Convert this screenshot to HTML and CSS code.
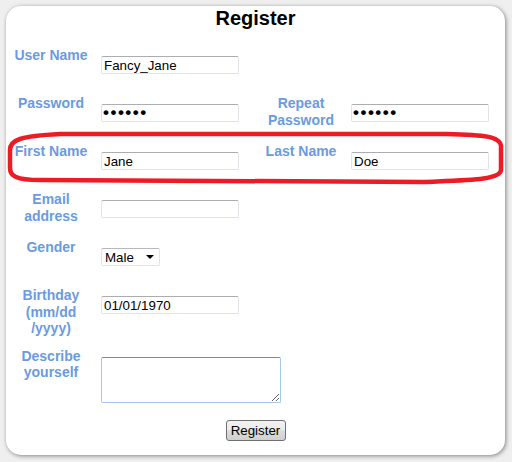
FILE: index.html
```html
<!DOCTYPE html>
<html>
<head>
<meta charset="utf-8">
<link rel="stylesheet" href="styles.css">
</head>
<body>
<div class="card">
  <h1 class="title">Register</h1>
  <form class="form">
    <div class="row">
      <label class="lbl">User Name</label>
      <div class="cell"><input class="field" type="text" value="Fancy_Jane"></div>
    </div>
    <div class="row">
      <label class="lbl">Password</label>
      <div class="cell"><input class="field pw" type="password" value="secret"></div>
      <label class="lbl">Repeat Password</label>
      <div class="cell cell-r"><input class="field pw" type="password" value="secret"></div>
    </div>
    <div class="row">
      <label class="lbl">First Name</label>
      <div class="cell"><input class="field" type="text" value="Jane"></div>
      <label class="lbl">Last Name</label>
      <div class="cell cell-r"><input class="field" type="text" value="Doe"></div>
    </div>
    <div class="row">
      <label class="lbl">Email<br>address</label>
      <div class="cell"><input class="field" type="text" value=""></div>
    </div>
    <div class="row">
      <label class="lbl">Gender</label>
      <div class="cell">
        <div class="select-wrap">
          <select class="select"><option>Male</option><option>Female</option></select>
        </div>
      </div>
    </div>
    <div class="row">
      <label class="lbl">Birthday<br>(mm/dd<br>/yyyy)</label>
      <div class="cell"><input class="field" type="text" value="01/01/1970"></div>
    </div>
    <div class="row">
      <label class="lbl">Describe<br>yourself</label>
      <div class="cell cell-last"><textarea class="area"></textarea></div>
    </div>
    <div class="actions"><button type="button" class="btn">Register</button></div>
  </form>
</div>
<svg class="mark" width="512" height="462" viewBox="0 0 512 462">
  <path d="M60 134 L446 134 C484 135 500 136 501 146 L501 170 C500 180 470 180 423 182 L40 180 C16 180 10 176 10 168 L10 150 C10 140 20 136 60 134 Z" fill="none" stroke="#ed1c24" stroke-width="4.5"/>
</svg>
</body>
</html>
```
FILE: styles.css
```css
html, body {
  margin: 0;
  padding: 0;
}
body {
  background: #efefef;
  padding: 6px;
  position: relative;
  width: 512px;
  height: 462px;
  box-sizing: border-box;
  font-family: "Liberation Sans", Arial, sans-serif;
}
.card {
  width: 499px;
  height: 449px;
  box-sizing: border-box;
  background: #ffffff;
  border-radius: 15px;
  box-shadow: 1px 1px 4px rgba(0, 0, 0, 0.45);
  padding: 1px 4px 0 4px;
}
.title {
  margin: 0 0 16px 0;
  font: bold 20px/23px "Liberation Sans", Arial, sans-serif;
  color: #000;
  text-align: center;
}
.form {
  margin: 0;
}
.row {
  display: grid;
  grid-template-columns: 82px 163px 92px 1fr;
  align-items: start;
}
.lbl {
  font: bold 14px/16.5px "Liberation Sans", Arial, sans-serif;
  color: #6a9be0;
  text-align: center;
  padding-top: 1px;
  padding-bottom: 10px;
}
.cell {
  padding: 10px 0 20px 9px;
}
.cell-r {
  padding-left: 4px;
}
.cell-last {
  padding-bottom: 0;
}
.field {
  display: block;
  width: 138px;
  height: 18px;
  box-sizing: border-box;
  margin: 0;
  border: 1px solid #dfe4ea;
  border-top-color: #abadb3;
  border-radius: 2px;
  padding: 0 2px;
  font: 13.33px "Liberation Sans", Arial, sans-serif;
  color: #000;
  background: #fff;
  outline: none;
}
.pw {
  letter-spacing: 1.5px;
  font-size: 17px;
  font-weight: bold;
  padding: 0 1px;
}
.select-wrap {
  position: relative;
  width: 59px;
  height: 18px;
}
.select {
  appearance: none;
  -webkit-appearance: none;
  display: block;
  width: 59px;
  height: 18px;
  box-sizing: border-box;
  margin: 0;
  border: 1px solid #dfe4ea;
  border-top-color: #b5b8bf;
  border-radius: 2px;
  padding: 0 0 0 3px;
  font: 13.33px "Liberation Sans", Arial, sans-serif;
  color: #000;
  background: #fff;
  outline: none;
}
.select-wrap::after {
  content: "";
  position: absolute;
  right: 6px;
  top: 7px;
  border-left: 4px solid transparent;
  border-right: 4px solid transparent;
  border-top: 4px solid #000;
  pointer-events: none;
}
.area {
  display: block;
  width: 180px;
  height: 46px;
  box-sizing: border-box;
  margin: 0;
  border: 1px solid #a5c8ea;
  border-top-color: #5d8fc9;
  border-radius: 2px;
  padding: 2px;
  font: 13.33px "Liberation Sans", Arial, sans-serif;
  outline: none;
  resize: both;
}
.actions {
  display: flex;
  justify-content: center;
  padding-top: 17px;
}
.btn {
  width: 60px;
  height: 21px;
  box-sizing: border-box;
  padding: 0;
  margin: 0;
  border: 1px solid #707070;
  border-radius: 3px;
  background: linear-gradient(#f2f2f2, #ebebeb 50%, #dddddd 50%, #cfcfcf);
  font: 13.33px "Liberation Sans", Arial, sans-serif;
  color: #000;
}
.mark {
  position: absolute;
  left: 0;
  top: 0;
  pointer-events: none;
}
```
